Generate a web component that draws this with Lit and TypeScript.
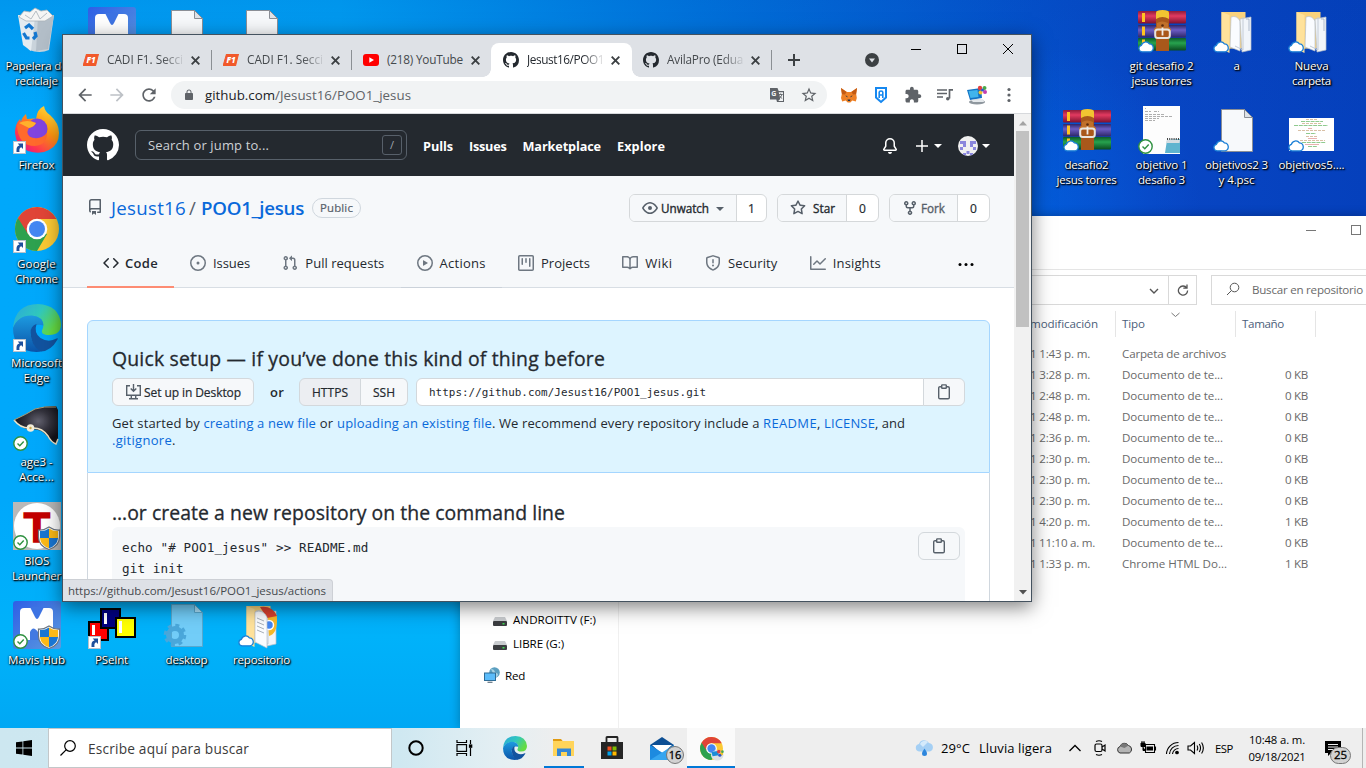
import { LitElement, html, svg, css } from "lit";
import { customElement, property, query } from "lit/decorators.js";
import { classMap } from "lit/directives/class-map.js";

/** One line of text whose tracking is tuned so that it fills a given width. */
@customElement("fit-text")
class FitText extends LitElement {
  @property() text = "";
  @property({ type: Number }) w = 0;
  @query("span") span!: HTMLSpanElement;
  static styles = css`
    :host { display: inline-block; white-space: pre; }
  `;
  render() {
    return html`<span>${this.text}</span>`;
  }
  updated() {
    this.span.style.letterSpacing = "0px";
    const natural = this.span.getBoundingClientRect().width;
    this.span.style.letterSpacing = (this.w - natural) / this.text.length + "px";
    this.style.width = this.w + "px";
  }
}

const t = (text: string, w: number) => html`<fit-text .text=${text} .w=${w}></fit-text>`;
const icon = (d: string, size = 16, box = 16) =>
  html`<svg width=${size} height=${size} viewBox="0 0 ${box} ${box}" fill="currentColor"><path fill-rule="evenodd" d=${d}></path></svg>`;

const P = {
  github: "M8 0C3.58 0 0 3.58 0 8c0 3.54 2.29 6.53 5.47 7.59.4.07.55-.17.55-.38 0-.19-.01-.82-.01-1.49-2.01.37-2.53-.49-2.69-.94-.09-.23-.48-.94-.82-1.13-.28-.15-.68-.52-.01-.53.63-.01 1.08.58 1.23.82.72 1.21 1.87.87 2.33.66.07-.52.28-.87.51-1.07-1.78-.2-3.64-.89-3.64-3.95 0-.87.31-1.59.82-2.15-.08-.2-.36-1.02.08-2.12 0 0 .67-.21 2.2.82.64-.18 1.32-.27 2-.27.68 0 1.36.09 2 .27 1.53-1.04 2.2-.82 2.2-.82.44 1.1.16 1.92.08 2.12.51.56.82 1.27.82 2.15 0 3.07-1.87 3.75-3.65 3.95.29.25.54.73.54 1.48 0 1.07-.01 1.93-.01 2.2 0 .21.15.46.55.38A8.013 8.013 0 0016 8c0-4.42-3.58-8-8-8z",
  repo: "M2 2.5A2.5 2.5 0 014.5 0h8.75a.75.75 0 01.75.75v12.5a.75.75 0 01-.75.75h-2.5a.75.75 0 110-1.5h1.75v-2h-8a1 1 0 00-.714 1.7.75.75 0 01-1.072 1.05A2.495 2.495 0 012 11.5v-9zm10.5-1V9h-8c-.356 0-.694.074-1 .208V2.5a1 1 0 011-1h8zM5 12.25v3.25a.25.25 0 00.4.2l1.45-1.087a.25.25 0 01.3 0L8.6 15.7a.25.25 0 00.4-.2v-3.25a.25.25 0 00-.25-.25h-3.5a.25.25 0 00-.25.25z",
  code: "M4.72 3.22a.75.75 0 011.06 1.06L2.06 8l3.72 3.72a.75.75 0 11-1.06 1.06L.47 8.53a.75.75 0 010-1.06l4.25-4.25zm6.56 0a.75.75 0 10-1.06 1.06L13.94 8l-3.72 3.72a.75.75 0 101.06 1.06l4.25-4.25a.75.75 0 000-1.06l-4.25-4.25z",
  issue: "M8 9.5a1.5 1.5 0 100-3 1.5 1.5 0 000 3zM8 0a8 8 0 100 16A8 8 0 008 0zM1.5 8a6.5 6.5 0 1113 0 6.5 6.5 0 01-13 0z",
  pr: "M7.177 3.073L9.573.677A.25.25 0 0110 .854v4.792a.25.25 0 01-.427.177L7.177 3.427a.25.25 0 010-.354zM3.75 2.5a.75.75 0 100 1.5.75.75 0 000-1.5zm-2.25.75a2.25 2.25 0 113 2.122v5.256a2.251 2.251 0 11-1.5 0V5.372A2.25 2.25 0 011.5 3.25zM11 2.5h-1V4h1a1 1 0 011 1v5.628a2.251 2.251 0 101.5 0V5A2.5 2.5 0 0011 2.5zm1 10.25a.75.75 0 111.5 0 .75.75 0 01-1.5 0zM3.75 12a.75.75 0 100 1.5.75.75 0 000-1.5z",
  play: "M1.5 8a6.5 6.5 0 1113 0 6.5 6.5 0 01-13 0zM8 0a8 8 0 100 16A8 8 0 008 0zM6.379 5.227A.25.25 0 006 5.442v5.117a.25.25 0 00.379.214l4.264-2.559a.25.25 0 000-.428L6.379 5.227z",
  project: "M1.75 0A1.75 1.75 0 000 1.75v12.5C0 15.216.784 16 1.75 16h12.5A1.75 1.75 0 0016 14.25V1.75A1.75 1.75 0 0014.25 0H1.75zM1.5 1.75a.25.25 0 01.25-.25h12.5a.25.25 0 01.25.25v12.5a.25.25 0 01-.25.25H1.75a.25.25 0 01-.25-.25V1.75zM11.75 3a.75.75 0 00-.75.75v7.5a.75.75 0 001.5 0v-7.5a.75.75 0 00-.75-.75zm-8.25.75a.75.75 0 011.5 0v5.5a.75.75 0 01-1.5 0v-5.5zM8 3a.75.75 0 00-.75.75v3.5a.75.75 0 001.5 0v-3.5A.75.75 0 008 3z",
  book: "M0 1.75A.75.75 0 01.75 1h4.253c1.227 0 2.317.59 3 1.501A3.744 3.744 0 0111.006 1h4.245a.75.75 0 01.75.75v10.5a.75.75 0 01-.75.75h-4.507a2.25 2.25 0 00-1.591.659l-.622.621a.75.75 0 01-1.06 0l-.622-.621A2.25 2.25 0 005.258 13H.75a.75.75 0 01-.75-.75V1.75zm8.755 3a2.25 2.25 0 012.25-2.25H14.5v9h-3.757c-.71 0-1.4.201-1.992.572l.004-7.322zm-1.504 7.324l.004-5.073-.002-2.253A2.25 2.25 0 005.003 2.5H1.5v9h3.757a3.75 3.75 0 011.994.574z",
  shield: "M7.467.133a1.75 1.75 0 011.066 0l5.25 1.68A1.75 1.75 0 0115 3.48V7c0 1.566-.32 3.182-1.303 4.682-.983 1.498-2.585 2.813-5.032 3.855a1.7 1.7 0 01-1.33 0c-2.447-1.042-4.049-2.357-5.032-3.855C1.32 10.182 1 8.566 1 7V3.48a1.75 1.75 0 011.217-1.667l5.25-1.68zm.61 1.429a.25.25 0 00-.153 0l-5.25 1.68a.25.25 0 00-.174.238V7c0 1.358.275 2.666 1.057 3.86.784 1.194 2.121 2.34 4.366 3.297a.2.2 0 00.154 0c2.245-.956 3.582-2.104 4.366-3.298C13.225 9.666 13.5 8.36 13.5 7V3.48a.25.25 0 00-.174-.237l-5.25-1.68zM9 10.5a1 1 0 11-2 0 1 1 0 012 0zm-.25-5.75a.75.75 0 10-1.5 0v3a.75.75 0 001.5 0v-3z",
  graph: "M1.5 1.75a.75.75 0 00-1.5 0v12.5c0 .414.336.75.75.75h14.5a.75.75 0 000-1.5H1.5V1.75zm14.28 2.53a.75.75 0 00-1.06-1.06L10 7.94 7.53 5.47a.75.75 0 00-1.06 0L3.22 8.72a.75.75 0 001.06 1.06L7 7.06l2.47 2.47a.75.75 0 001.06 0l5.25-5.25z",
  eye: "M1.679 7.932c.412-.621 1.242-1.75 2.366-2.717C5.175 4.242 6.527 3.5 8 3.5c1.473 0 2.824.742 3.955 1.715 1.124.967 1.954 2.096 2.366 2.717a.119.119 0 010 .136c-.412.621-1.242 1.75-2.366 2.717C10.825 11.758 9.473 12.5 8 12.5c-1.473 0-2.824-.742-3.955-1.715C2.92 9.818 2.09 8.69 1.679 8.068a.119.119 0 010-.136zM8 2c-1.981 0-3.67.992-4.933 2.078C1.797 5.169.88 6.423.43 7.1a1.619 1.619 0 000 1.798c.45.678 1.367 1.932 2.637 3.024C4.329 13.008 6.019 14 8 14c1.981 0 3.67-.992 4.933-2.078 1.27-1.091 2.187-2.345 2.637-3.023a1.619 1.619 0 000-1.798c-.45-.678-1.367-1.932-2.637-3.023C11.671 2.992 9.981 2 8 2zm0 8a2 2 0 100-4 2 2 0 000 4z",
  star: "M8 .25a.75.75 0 01.673.418l1.882 3.815 4.21.612a.75.75 0 01.416 1.279l-3.046 2.97.719 4.192a.75.75 0 01-1.088.791L8 12.347l-3.766 1.98a.75.75 0 01-1.088-.79l.72-4.194L.818 6.374a.75.75 0 01.416-1.28l4.21-.611L7.327.668A.75.75 0 018 .25zm0 2.445L6.615 5.5a.75.75 0 01-.564.41l-3.097.45 2.24 2.184a.75.75 0 01.216.664l-.528 3.084 2.769-1.456a.75.75 0 01.698 0l2.77 1.456-.53-3.084a.75.75 0 01.216-.664l2.24-2.183-3.096-.45a.75.75 0 01-.564-.41L8 2.694v.001z",
  fork: "M5 3.25a.75.75 0 11-1.5 0 .75.75 0 011.5 0zm0 2.122a2.25 2.25 0 10-1.5 0v.878A2.25 2.25 0 005.75 8.5h1.5v2.128a2.251 2.251 0 101.5 0V8.5h1.5a2.25 2.25 0 002.25-2.25v-.878a2.25 2.25 0 10-1.5 0v.878a.75.75 0 01-.75.75h-4.5A.75.75 0 015 6.25v-.878zm3.75 7.378a.75.75 0 11-1.5 0 .75.75 0 011.5 0zm3-8.75a.75.75 0 100-1.5.75.75 0 000 1.5z",
  bell: "M8 16a2 2 0 001.985-1.75c.017-.137-.097-.25-.235-.25h-3.5c-.138 0-.252.113-.235.25A2 2 0 008 16zM8 1.5A3.5 3.5 0 004.5 5v2.947c0 .346-.102.683-.294.97l-1.703 2.556a.018.018 0 00-.003.01l.001.006c0 .002.002.004.004.006a.017.017 0 00.006.004l.007.001h10.964l.007-.001a.016.016 0 00.006-.004.016.016 0 00.004-.006l.001-.007a.017.017 0 00-.003-.01l-1.703-2.554a1.75 1.75 0 01-.294-.97V5A3.5 3.5 0 008 1.5zM3 5a5 5 0 0110 0v2.947c0 .05.015.098.042.139l1.703 2.555A1.518 1.518 0 0113.482 13H2.518a1.518 1.518 0 01-1.263-2.36l1.703-2.554A.25.25 0 003 7.947V5z",
  arrow: "M20 11H7.83l5.59-5.59L12 4l-8 8 8 8 1.41-1.41L7.83 13H20v-2z",
  forward: "M4 11h12.17l-5.59-5.59L12 4l8 8-8 8-1.41-1.41L16.17 13H4v-2z",
  reload: "M17.65 6.35C16.2 4.9 14.21 4 12 4c-4.42 0-7.99 3.58-7.99 8s3.57 8 7.99 8c3.73 0 6.84-2.55 7.73-6h-2.08c-.82 2.33-3.04 4-5.65 4-3.31 0-6-2.69-6-6s2.69-6 6-6c1.66 0 3.14.69 4.22 1.78L13 11h7V4l-2.35 2.35z",
  lock: "M18 8h-1V6c0-2.76-2.24-5-5-5S7 3.24 7 6v2H6c-1.1 0-2 .9-2 2v10c0 1.1.9 2 2 2h12c1.1 0 2-.9 2-2V10c0-1.1-.9-2-2-2zM8.9 6c0-1.71 1.39-3.1 3.1-3.1s3.1 1.39 3.1 3.1v2H8.9V6z",
  puzzle: "M20.5 11H19V7c0-1.1-.9-2-2-2h-4V3.5C13 2.12 11.88 1 10.5 1S8 2.12 8 3.5V5H4c-1.1 0-1.99.9-1.99 2v3.8H3.5c1.49 0 2.7 1.21 2.7 2.7s-1.21 2.7-2.7 2.7H2V20c0 1.1.9 2 2 2h3.8v-1.5c0-1.49 1.21-2.7 2.7-2.7 1.49 0 2.7 1.21 2.7 2.7V22H17c1.1 0 2-.9 2-2v-4h1.5c1.38 0 2.5-1.12 2.5-2.5S21.88 11 20.5 11z",
  bookmark: "M22 9.24l-7.19-.62L12 2 9.19 8.63 2 9.24l5.46 4.73L5.82 21 12 17.27 18.18 21l-1.63-7.03L22 9.24zM12 15.4l-3.76 2.27 1-4.28-3.32-2.88 4.38-.38L12 6.1l1.71 4.04 4.38.38-3.32 2.88 1 4.28L12 15.4z",
};

/* ---- desktop artwork, drawn on a 48 x 48 field ---- */
const shortcut = svg`<rect x="0.5" y="35.5" width="12" height="12" fill="#fff" stroke="#b9c2cc"/><path d="M3.500 46v-2.500q0-3.500 3-4l-1.800-2H10v5.500l-1.700-1.700q-2.500.5-1.800 4.700z" fill="#1d4f9c"/>`;
const check = svg`<circle cx="7.500" cy="40.500" r="6.700" fill="#fff" stroke="#2f9141" stroke-width="1.400"/><path d="M4.500 40.500l2.300 2.300 3.900-4.200" fill="none" stroke="#2f9141" stroke-width="1.400"/>`;
const cloud = svg`<path d="M4 44.800a3.300 3.300 0 0 1-.6-6.500 4.500 4.500 0 0 1 8-1.500 4.100 4.100 0 0 1 1 8z" fill="#fff" stroke="#1a7fd6" stroke-width="1.300"/>`;
const uac = svg`<path d="M36 25q5 3.500 10.500 3v7q0 9-10.500 12.500Q25.500 44 25.500 35v-7Q31 28.500 36 25z" fill="#fff" stroke="#6b7480" stroke-width="1.200"/><path d="M36 26.500V36H27v-7q5 .2 9-2.500zM45 36v.5Q44 43.500 36 46.300V36z" fill="#1976d2"/><path d="M36 26.500V36h9v-7q-5 .2-9-2.500zM27 36v.5q1 7 9 9.800V36z" fill="#fcb916"/>`;
const page = svg`<path d="M8.500 3.500h23l8 8v34h-31z" fill="#f7f9fb" stroke="#8b8f96"/><path d="M31.500 3.500v8h8z" fill="#dfe3e8" stroke="#8b8f96"/>`;
const mavis = svg`<defs><linearGradient id="mv" x1="0" x2="1" y2="1"><stop stop-color="#2e5fe6"/><stop offset="1" stop-color="#5c9bdf"/></linearGradient></defs><rect width="48" height="48" rx="3" fill="url(#mv)"/><rect x="7" y="7" width="33" height="32" rx="4" fill="#fff"/><path d="M17 6h14l-5 10q-2 4-4 0z" fill="#3d73e3"/><path d="M17 39v-8q3-7 8 0 4-5 6 0v8z" fill="#4279e2"/>`;
const folder = svg`<path d="M8.500 5h24v36l-24 1z" fill="#f9d27c"/><path d="M8.500 5l8 3v38l-8-4z" fill="#ffe29b"/><path d="M18 10q6-2 9 4v30l-10-4z" fill="#fafcff" stroke="#b8c0ca" stroke-width=".7"/><path d="M27 12l11-2v33l-9 2z" fill="#f1f5fa" stroke="#b8c0ca" stroke-width=".7"/><path d="M30 10v33l-8-4" fill="none" stroke="#c4ccd6"/><path d="M33 12h3v12" fill="none" stroke="#93a3b7" stroke-width=".7"/>`;
const rar = svg`<defs>
  <linearGradient id="r1" x2="0" y2="1"><stop stop-color="#8c1c3a"/><stop offset=".4" stop-color="#e23a60"/><stop offset="1" stop-color="#7c1230"/></linearGradient>
  <linearGradient id="r2" x2="0" y2="1"><stop stop-color="#2c2668"/><stop offset=".4" stop-color="#6c5cc4"/><stop offset="1" stop-color="#2c2668"/></linearGradient>
  <linearGradient id="r3" x2="0" y2="1"><stop stop-color="#0c5a28"/><stop offset=".4" stop-color="#27a34e"/><stop offset="1" stop-color="#0a4a20"/></linearGradient></defs>
  <rect y="4" width="48" height="12.500" rx="1" fill="url(#r1)"/><rect y="18" width="48" height="12.500" rx="1" fill="url(#r2)"/><rect y="31" width="48" height="12.500" rx="1" fill="url(#r3)"/>
  <path d="M4 6h3v9H4zM4 19.500h3v9H4zM4 32.500h3v9H4z" fill="#ffc421"/>
  <rect x="18" y="4" width="13" height="40" fill="#a9581b"/><path d="M18 12V6q0-3 6.500-3T31 6v6q-6.500-4-13 0z" fill="#f2c431"/>
  <path d="M16 24q0-4 3-4v-4q5-3 11 0v4q3 0 3 4z" fill="#c0702a"/><circle cx="24.500" cy="18.500" r="1.300" fill="#5c2c0c"/><rect x="17.200" y="22.500" width="14.600" height="8.500" rx="2.500" fill="none" stroke="#e8e4de" stroke-width="2"/><path d="M24.500 20.500v8" stroke="#efece8" stroke-width="1.800"/>`;
const chromeLogo = svg`<circle cx="24" cy="24" r="22" fill="#fbc934"/><path d="M24 24L4.950 13A22 22 0 0 0 24 46l10-17z" fill="#2da14f"/><path d="M24 14h19.600A22 22 0 0 0 4.950 13L15 29q-2-15 9-15z" fill="#e04437"/><circle cx="24" cy="24" r="10.300" fill="#fff"/><circle cx="24" cy="24" r="8" fill="#4487f2"/>`;
const edgeLogo = svg`<defs><linearGradient id="e1" x2="1" y2=".5"><stop stop-color="#2aa7dc"/><stop offset=".55" stop-color="#31c8bd"/><stop offset="1" stop-color="#65dc43"/></linearGradient><linearGradient id="e2" x2="0" y2="1"><stop stop-color="#1d9be0"/><stop offset="1" stop-color="#0b53a8"/></linearGradient></defs>
  <path d="M0 24Q2 0 25 0q21 1 23 20 0 11-12 11-10 0-6-7 2-10-10-12Q6 11 0 24z" fill="url(#e1)"/>
  <path d="M0 24Q5 11 19 11.500q11 1 11.500 10-12-3-13 8 0 11 13 17-4 1.500-7 1.500Q0 47 0 24z" fill="url(#e2)"/>
  <path d="M17.500 29q0-7 6-9-3 9 4 14 8 5 16 .5 2-.8 1 1Q38 47 28 47.500 18 42 17.500 29z" fill="#12539f"/>`;

const ART: Record<string, unknown> = {
  bin: svg`<path d="M5 8l36 0-5 35q-9 4-20 0z" fill="#c9d3db"/><path d="M5 8l5 30 8 6 4-34z" fill="#e4ebf0"/><path d="M41 8l-6 34-12 2 2-34z" fill="#b3bec8"/><path d="M6 10l5-6 6 1 5-4 6 3 6-1 6 6-8 5H13z" fill="#f5f5f5" stroke="#aab2b9" stroke-width=".8"/><path d="M12 8l6 4 5-8 4 8 7-6" fill="none" stroke="#b6bdc4"/><path d="M12 21l4-3 4 4M10.500 26l3 5h3M22 25l1 4-3 3" fill="none" stroke="#1477cf" stroke-width="3.200"/>`,
  firefox: svg`<defs><linearGradient id="ff" x1="1" x2=".2" y2="1"><stop stop-color="#fff44f"/><stop offset=".45" stop-color="#ff980e"/><stop offset=".8" stop-color="#ff3750"/><stop offset="1" stop-color="#e31587"/></linearGradient></defs><path d="M2 27q0-9 5-14l1 3q1-5 5-8l1 5q8-1 9 0Q24 3 31 0q1 6 6 9 9 8 9 18 0 12-10 17-9 5-21 1Q3 40 2 27z" fill="url(#ff)"/><circle cx="24" cy="23" r="10.500" fill="#8144df"/><path d="M4 19q8-8 19-2-2 4-7 5-5 8 5 10 8 1 13-5 0 12-12 13Q5 40 4 19z" fill="#ff6a2c"/><path d="M6 17q8-4 17 0-2 4-7 5z" fill="#ffb12c"/>${shortcut}`,
  chrome: svg`${chromeLogo}${shortcut}`,
  edge: svg`${edgeLogo}${shortcut}`,
  hat: svg`<defs><radialGradient id="ht" cx=".55" cy=".4" r=".55"><stop stop-color="#62616e"/><stop offset=".5" stop-color="#33323c"/><stop offset="1" stop-color="#141319"/></radialGradient></defs><path d="M1 17Q14 11 22 6q9-3 21-3l2 4v28l-2 6q-4-1-9-8-7-8-16-6-10-1-17-10z" fill="url(#ht)"/><path d="M1 17q7 9 17 8 11-1 17 8 3 6 8 8l2-5" fill="none" stroke="#efe5c8" stroke-width="1.500"/><path d="M1 17Q14 11 22 6q9-3 21-2" fill="none" stroke="#a99c74"/><circle cx="17.500" cy="25" r="3.800" fill="#f4eeda"/><circle cx="17.500" cy="25" r="1.200" fill="#c9a94c"/>${check}`,
  bios: svg`<rect width="48" height="48" fill="#b9b9b9"/><circle cx="24" cy="24" r="23" fill="#fff"/><text x="24" y="40" font-family="Liberation Sans" font-weight="900" font-size="43" text-anchor="middle" fill="#c20000" stroke="#c20000" stroke-width="1.600">T</text>${check}${uac}`,
  mavis: svg`${mavis}`,
  mavisHub: svg`${mavis}${check}${uac}`,
  pseint: svg`<rect x="1" y="21" width="19" height="18" fill="#f00" stroke="#000" stroke-width="2"/><path d="M4 24h3v10H4z" fill="#fff"/><rect x="13" y="8" width="19" height="19" fill="#000080" stroke="#000" stroke-width="2"/><path d="M16 12h3v11h-3z" fill="#fff"/><rect x="28" y="17" width="19" height="19" fill="#ff0" stroke="#000" stroke-width="2"/><path d="M31 20h3v12h-3z" fill="#fff"/>${shortcut}`,
  ini: svg`<path d="M8.500 3.500h23l8 8v34h-31z" fill="#72cdf8" stroke="#58a9cf"/><path d="M31.500 3.500v8h8z" fill="#a8e0fb" stroke="#58a9cf"/><circle cx="12" cy="34" r="6.500" fill="none" stroke="#4aa7da" stroke-width="5"/><circle cx="12" cy="34" r="9.800" fill="none" stroke="#4aa7da" stroke-width="3" stroke-dasharray="4 3.700"/>`,
  page: svg`${page}`,
  pageCloud: svg`${page}${cloud}`,
  folder: svg`${folder}${cloud}`,
  repos: svg`${folder}<path d="M29 9q10-2 10 10 0 14-8 16z" fill="#f7b92b"/><path d="M22 6q12-2 17 9l-10 2z" fill="#d8402f"/><circle cx="31" cy="24" r="4.500" fill="#4487f2" stroke="#fff" stroke-width="1.500"/><path d="M17 11q8-3 12 5v31l-12-6z" fill="#fafcff" stroke="#b8c0ca" stroke-width=".7"/><path d="M19 17l7 3M19 21l7 3M19 25l7 3M19 29l7 3" stroke="#a9b1bb"/>${cloud}`,
  rar: svg`${rar}${cloud}`,
  note: svg`<rect x="5" width="37" height="48" fill="#fdfdfd"/><path d="M7 2.500h1M7 5.500h6M16 5.500h5M7 8.500h20M7 10.500h28M7 12.500h14M7 14.500h10" stroke="#9b9b9b" stroke-width=".8" stroke-dasharray="3 1"/><path d="M29 34l13-1v14H27z" fill="#5fb4cf"/><path d="M29 34h13l-.5 3H28z" fill="#d5dde2"/><path d="M29 33h13" stroke="#444" stroke-width="2" stroke-dasharray="1 1.200"/>${check}`,
  shot: svg`<rect x="1" y="12" width="45" height="33" fill="#fff"/><g opacity=".6"><path d="M18 13.500h12M14 17.500h20M10 24.500h28M18 30.500h12M12 34.500h25" stroke="#b98b5a" stroke-width=".9" stroke-dasharray="3 1"/><path d="M13 15.500h22M6 19.500h34M18 27.500h10M14 36.500h24M20 40.500h9" stroke="#46a845" stroke-width="1" stroke-dasharray="4 .8"/><path d="M20 22.500h4M20 32.500h9M17 38.500h14" stroke="#cf5a5a" stroke-width=".8"/></g>${cloud}`,
};

type Item = { c: number; r: number; art: string; label: [string, number][] };
const ITEMS: Item[] = [
  { c: 0, r: 0, art: "bin", label: [["Papelera de", 62], ["reciclaje", 43]] },
  { c: 1, r: 0, art: "mavis", label: [] },
  { c: 2, r: 0, art: "page", label: [] },
  { c: 3, r: 0, art: "page", label: [] },
  { c: 0, r: 1, art: "firefox", label: [["Firefox", 36]] },
  { c: 0, r: 2, art: "chrome", label: [["Google", 39], ["Chrome", 43]] },
  { c: 0, r: 3, art: "edge", label: [["Microsoft", 51], ["Edge", 26]] },
  { c: 0, r: 4, art: "hat", label: [["age3 -", 32], ["Acce...", 35]] },
  { c: 0, r: 5, art: "bios", label: [["BIOS", 25], ["Launcher", 49]] },
  { c: 0, r: 6, art: "mavisHub", label: [["Mavis Hub", 57]] },
  { c: 1, r: 6, art: "pseint", label: [["PSeInt", 33]] },
  { c: 2, r: 6, art: "ini", label: [["desktop", 42]] },
  { c: 3, r: 6, art: "repos", label: [["repositorio", 57]] },
  { c: 15, r: 0, art: "rar", label: [["git desafio 2", 64], ["jesus torres", 60]] },
  { c: 16, r: 0, art: "folder", label: [["a", 6]] },
  { c: 17, r: 0, art: "folder", label: [["Nueva", 34], ["carpeta", 39]] },
  { c: 14, r: 1, art: "rar", label: [["desafio2", 44], ["jesus torres", 60]] },
  { c: 15, r: 1, art: "note", label: [["objetivo 1", 52], ["desafio 3", 47]] },
  { c: 16, r: 1, art: "pageCloud", label: [["objetivos2 3", 63], ["y 4.psc", 36]] },
  { c: 17, r: 1, art: "shot", label: [["objetivos5....", 66]] },
];

const FILES: [string, number, string, string][] = [
  ["1 1:43 p. m.", 60, "Carpeta de archivos", ""],
  ["1 3:28 p. m.", 60, "Documento de te...", "0 KB"],
  ["1 2:48 p. m.", 60, "Documento de te...", "0 KB"],
  ["1 2:48 p. m.", 60, "Documento de te...", "0 KB"],
  ["1 2:36 p. m.", 60, "Documento de te...", "0 KB"],
  ["1 2:30 p. m.", 60, "Documento de te...", "0 KB"],
  ["1 2:30 p. m.", 60, "Documento de te...", "0 KB"],
  ["1 2:30 p. m.", 60, "Documento de te...", "0 KB"],
  ["1 4:20 p. m.", 60, "Documento de te...", "1 KB"],
  ["1 11:10 a. m.", 65, "Documento de te...", "0 KB"],
  ["1 1:33 p. m.", 60, "Chrome HTML Do...", "1 KB"],
];
const TYPE_W: Record<string, number> = { "Carpeta de archivos": 104, "Documento de te...": 101, "Chrome HTML Do...": 105 };

@customElement("desktop-icons")
class DesktopIcons extends LitElement {
  static styles = css`
    .item { position: absolute; width: 75px; display: flex; flex-direction: column; align-items: center; }
    .label { display: flex; flex-direction: column; align-items: center; margin-top: 3px; font-size: 11.6px; line-height: 15px; color: #fff; text-shadow: 1px 1px 2px #000, 1px 1px 1px rgba(0, 0, 0, 0.8), 0 0 2px rgba(0, 0, 0, 0.8); }
    svg { overflow: visible; }
  `;
  render() {
    return ITEMS.map(
      (i) => html`<div class="item" style="left:${i.c * 75 - 1}px;top:${i.r * 99 + 7}px">
        <svg width="48" height="48" viewBox="0 0 48 48">${ART[i.art]}</svg>
        <div class="label">${i.label.map(([s, w]) => t(s, w))}</div>
      </div>`
    );
  }
}

@customElement("explorer-window")
class ExplorerWindow extends LitElement {
  static styles = css`
    :host { display: flex; flex-direction: column; background: #fff; font-size: 11.6px; color: #6a6a6a; overflow: hidden; }
    .title { height: 54px; border-bottom: 1px solid #e5e5e5; box-sizing: border-box; display: flex; justify-content: flex-end; align-items: flex-start; padding-top: 9px; gap: 35px; }
    .bar { display: flex; justify-content: flex-end; margin-top: 5px; height: 30px; }
    .addr { width: 700px; border: 1px solid #d9d9d9; box-sizing: border-box; display: flex; justify-content: flex-end; align-items: center; }
    .addr svg { margin: 2px 7px 0 0; }
    .reload { width: 29px; margin-left: -1px; border: 1px solid #d9d9d9; box-sizing: border-box; display: flex; align-items: center; justify-content: center; }
    .reload svg { margin-left: 1px; }
    .find { width: 155px; margin-left: 14px; border: 1px solid #d9d9d9; border-right: 0; box-sizing: border-box; display: flex; align-items: center; padding: 0 0 2px 14px; gap: 12px; white-space: nowrap; }
    .body { flex: 1; display: flex; }
    .tree { width: 159px; border-right: 1px solid #f0f0f0; box-sizing: border-box; display: flex; flex-direction: column; justify-content: flex-end; color: #000; padding: 0 0 41px 24px; }
    .node { display: flex; align-items: center; gap: 5px; height: 24px; }
    .drive { padding-left: 9px; gap: 6px; }
    .net { margin-top: 8px; }
    .drive svg { position: relative; top: 2px; }
    .list { flex: 1; padding-left: 411px; display: flex; flex-direction: column; }
    .head, .row { display: grid; grid-template-columns: 85px 120px 80px 1fr; align-items: center; }
    .head { height: 26px; margin: 6px 0 6px; color: #4c607a; line-height: 26px; }
    .head > div + div { border-left: 1px solid #e5e5e5; padding-left: 6px; height: 26px; }
    .tipo { position: relative; }
    .tipo svg { position: absolute; left: 55px; top: 1px; }
    .row { height: 21px; }
    .type { padding-left: 7px; }
    .size { text-align: right; padding-right: 7px; }
  `;
  drive() {
    return html`<svg width="14" height="9" viewBox="0 0 14 9"><path d="M2 0h10l2 4H0z" fill="#c9cccf"/><rect y="4" width="14" height="5" rx="1" fill="#3b3d40"/><rect x="9.500" y="6" width="2" height="1.500" fill="#3fdc52"/></svg>`;
  }
  render() {
    return html`
      <div class="title">
        <svg width="10" height="10"><path d="M0 5.500h10" stroke="#777"/></svg>
        <svg width="15" height="10"><rect x=".5" y=".5" width="9" height="9" fill="none" stroke="#777"/></svg>
      </div>
      <div class="bar">
        <div class="addr"><svg width="14" height="8" viewBox="0 0 14 8"><path d="M3 2l4 4 4-4" fill="none" stroke="#555" stroke-width="1.400"/></svg></div>
        <div class="reload"><svg width="12" height="12" viewBox="0 0 12 12"><path d="M9.800 4A4.600 4.600 0 1 0 10.600 6.500M10 .5v3.700H6.300" fill="none" stroke="#555" stroke-width="1.300"/></svg></div>
        <div class="find">
          <svg width="14" height="14" viewBox="0 0 14 14"><circle cx="8.500" cy="5.500" r="4.300" fill="none" stroke="#555"/><path d="M5.500 8.500L1 13" stroke="#555"/></svg>
          ${t("Buscar en repositorio", 111)}
        </div>
      </div>
      <div class="body">
        <div class="tree">
          <div class="node drive">${this.drive()}${t("ANDROIT (E:)", 70)}</div>
          <div class="node drive">${this.drive()}${t("ANDROITTV (F:)", 83)}</div>
          <div class="node drive">${this.drive()}${t("LIBRE (G:)", 51)}</div>
          <div class="node net">
            <svg width="16" height="16" viewBox="0 0 16 16"><circle cx="10.500" cy="5.500" r="5.300" fill="#5b9fc0"/><path d="M7 2q3 0 4 3l3 2q0 3-3 3.500" fill="#a9d3e4"/><rect x=".5" y="6" width="11" height="7.500" fill="#5bbcfa" stroke="#2f6c96"/><path d="M3.500 15.300h5" stroke="#6c7c89" stroke-width="1.300"/></svg>
            ${t("Red", 20)}
          </div>
        </div>
        <div class="list">
          <div class="head">
            <div>${t("modificación", 68)}</div>
            <div class="tipo">${t("Tipo", 23)}<svg width="9" height="6"><path d="M.5 1L4.500 4.500 8.500 1" fill="none" stroke="#777"/></svg></div>
            <div>${t("Tamaño", 42)}</div>
            <div></div>
          </div>
          ${FILES.map(
            ([d, w, ty, s]) => html`<div class="row"><div>${t(d, w)}</div><div class="type">${t(ty, TYPE_W[ty])}</div><div class="size">${s ? t(s, 23) : ""}</div></div>`
          )}
        </div>
      </div>
    `;
  }
}

const f1 = html`<svg width="16" height="12" viewBox="0 0 16 12"><path d="M3.500 0h12L12.500 12H0z" fill="#f1592a" stroke="#f1592a" stroke-linejoin="round"/><text x="8" y="9" font-size="8" font-weight="800" font-style="italic" font-family="Open Sans" text-anchor="middle" fill="#fff">F1</text></svg>`;
const yt = html`<svg width="16" height="12" viewBox="0 0 16 12"><rect width="16" height="12" rx="3" fill="#f00"/><path d="M6.300 3.300v5.400L11 6z" fill="#fff"/></svg>`;
const gh = icon(P.github);
const TABS = [
  { ic: f1, s: "CADI F1. Secci", w: 76 },
  { ic: f1, s: "CADI F1. Secci", w: 76 },
  { ic: yt, s: "(218) YouTube", w: 76, full: true },
  { ic: gh, s: "Jesust16/POO1", w: 77, active: true },
  { ic: gh, s: "AvilaPro (Edua", w: 76 },
];
const NAV: [string, string, number][] = [
  ["code", "Code", 33],
  ["issue", "Issues", 37],
  ["pr", "Pull requests", 79],
  ["play", "Actions", 46],
  ["project", "Projects", 49],
  ["book", "Wiki", 27.5],
  ["shield", "Security", 49.5],
  ["graph", "Insights", 48],
];

@customElement("browser-window")
class BrowserWindow extends LitElement {
  static styles = css`
    :host { display: flex; flex-direction: column; background: #fff; overflow: hidden; color: #24292f; font-size: 13px; }
    svg { flex: none; display: block; }
    .strip { height: 42px; background: #dee1e6; display: flex; padding-left: 8px; box-sizing: border-box; color: #45494d; flex: none; }
    .tab { width: 140px; box-sizing: border-box; height: 34px; margin-top: 8px; padding: 0 10px 0 12px; display: flex; align-items: center; position: relative; font-size: 11.8px; }
    .tab .name { margin-left: 8px; width: 77px; overflow: hidden; line-height: 19px; height: 20px; }
    .tab .fade { -webkit-mask-image: linear-gradient(90deg, #000 72%, transparent 102%); mask-image: linear-gradient(90deg, #000 72%, transparent 102%); }
    .tab .x { margin-left: 7px; }
    .tab.sep { height: 20px; margin-top: 15px; }
    .tab.sep::after { content: ""; position: absolute; right: -1px; top: 0; width: 1px; height: 20px; background: #8b8f94; }
    .tab.active { background: #fff; border-radius: 8px 8px 0 0; color: #24292f; width: 141px; margin-right: -1px; }
    .tab.active::before, .tab.active::after { content: ""; position: absolute; bottom: 0; width: 8px; height: 8px; }
    .tab.active::before { left: -8px; background: radial-gradient(circle at 0 0, #dee1e6 7.500px, #fff 8px); }
    .tab.active::after { right: -8px; background: radial-gradient(circle at 100% 0, #dee1e6 7.500px, #fff 8px); }
    .gh { color: #24292f; }
    .plus { margin: 19px 0 0 17px; }
    .search-tabs { margin: 18px 0 0 65px; }
    .ctl { display: flex; margin: 9px 0 0 32px; gap: 36px; color: #000; }
    .tools { height: 36px; display: flex; align-items: center; padding: 0 13px; color: #5f6368; flex: none; border-bottom: 1px solid #d7d9dc; }
    .tools .nav { display: flex; gap: 14px; }
    .tools .nav svg { width: 20px; height: 20px; margin: -1px; }
    .dim { color: #bdc1c6; }
    .omni { width: 656px; height: 28px; border-radius: 14px; background: #f1f3f4; margin-left: 13px; box-sizing: border-box; padding: 0 9px 0 12px; display: flex; align-items: center; font-size: 13.300px; }
    .omni .url { margin-left: 10px; flex: 1; display: flex; }
    .omni .host { color: #202124; }
    .omni .end { display: flex; gap: 15px; align-items: center; }
    .ext { display: flex; gap: 14px; margin-left: 13px; align-items: center; }
    .ext .me { margin-left: -1px; }
    .ext .more { margin-left: 0; }
    .view { flex: 1; display: flex; min-height: 0; }
    .page { flex: 1; overflow: hidden; position: relative; }
    .scroll { width: 17px; background: #f1f1f1; display: flex; flex-direction: column; align-items: center; }
    .scroll .up { margin-top: 7px; }
    .scroll .thumb { width: 13px; height: 196px; background: #c1c1c1; margin-top: 5px; }
    .scroll .down { margin-top: auto; margin-bottom: 6px; }
    .ghead { height: 62px; background: #24292f; color: #fff; display: flex; align-items: center; padding: 0 24px; }
    .ghead .box { width: 272px; height: 30px; box-sizing: border-box; border: 1px solid #57606a; border-radius: 6px; margin-left: 16px; display: flex; align-items: center; justify-content: space-between; padding: 0 4px 0 12px; color: #cdd1d5; }
    .slash { width: 20px; height: 20px; box-sizing: border-box; border: 1px solid #57606a; border-radius: 3px; font-size: 11px; line-height: 17px; text-align: center; color: #a0a6ac; }
    .links { display: flex; gap: 16px; margin-left: 16px; font-weight: 700; font-size: 12.700px; flex: 1; padding-top: 2px; }
    .caret { width: 0; height: 0; border: 4px solid transparent; border-top-color: currentColor; border-bottom: 0; }
    .acts { display: flex; align-items: center; padding-top: 1px; }
    .add { margin: 0 6px 0 18px; }
    .face { margin: 0 4px 0 16px; }
    .rhead { height: 112px; box-sizing: border-box; background: #f6f8fa; border-bottom: 1px solid #d8dee4; padding: 18px 24px 0; display: flex; flex-direction: column; justify-content: space-between; }
    .top { display: flex; align-items: center; height: 28px; color: #57606a; }
    .top > svg { margin-top: -2px; }
    .title { font-size: 18.700px; display: flex; margin: -2px 0 0 8px; color: #0969da; }
    .title .sl { color: #57606a; margin: 0 5px 0 3px; }
    .title b { font-weight: 600; }
    .pill { border: 1px solid #d0d7de; border-radius: 10px; height: 20px; box-sizing: border-box; padding: 0 7px; margin-left: 8px; font-size: 11.400px; line-height: 18px; margin-top: -1px; -webkit-text-stroke: 0.2px currentColor; }
    .btns { display: flex; gap: 10px; margin-left: auto; color: #24292f; font-size: 11.700px; }
    .grp { display: flex; border: 1px solid #d5d8da; border-radius: 6px; height: 28px; box-sizing: border-box; background: #fff; overflow: hidden; }
    .grp .l { background: #f6f8fa; border-right: 1px solid #d5d8da; display: flex; align-items: center; padding: 0 12px; -webkit-text-stroke: 0.35px currentColor; }
    .grp .l svg { color: #57606a; }
    .grp .n { display: flex; align-items: center; justify-content: center; flex: 1; font-size: 12px; -webkit-text-stroke: 0.2px currentColor; }
    .g1 { width: 138px; } .g2 { width: 102px; } .g3 { width: 101px; }
    .g1 .l { width: 107px; box-sizing: border-box; } .g2 .l { width: 69px; box-sizing: border-box; } .g3 .l { width: 68px; box-sizing: border-box; color: #57606a; }
    .g1 svg { margin-right: 3px; }
    .g1 .caret { margin: 2px 0 0 7px; color: #57606a; }
    .g2 svg { margin-right: 7px; }
    .g3 svg { margin-right: 3px; }
    .tabs { display: flex; height: 48px; margin-bottom: -1px; }
    .nt { display: flex; align-items: center; gap: 7px; padding: 0 16.300px 0 16px; border-bottom: 2px solid transparent; }
    .nt svg { color: #6e7781; }
    .nt.on { font-weight: 600; border-color: #fd8c73; gap: 6px; padding-right: 16px; }
    .nt.on svg { color: #24292f; }
    .nt.hov { border-bottom-color: #cbd2da; border-bottom-width: 1px; padding-bottom: 1px; }
    .dots { margin-left: auto; align-self: center; margin-right: 16px; }
    .main { margin: 32px 24px 0; }
    .quick { height: 153px; box-sizing: border-box; border: 1px solid #a5d6ff; border-radius: 6px 6px 0 0; background: #ddf4ff; padding: 23px 24px 0; }
    h3 { margin: 0; font-weight: 500; font-size: 19.400px; line-height: 30px; height: 34px; -webkit-text-stroke: 0.3px currentColor; }
    .set { display: flex; align-items: center; height: 28px; font-size: 12px; -webkit-text-stroke: 0.2px currentColor; }
    .btn { height: 28px; box-sizing: border-box; border: 1px solid #d3d8dc; border-radius: 6px; background: #f6f8fa; display: flex; align-items: center; padding: 0 12px; gap: 2px; color: #24292f; }
    .btn svg { color: #57606a; }
    .desk { width: 142px; }
    .or { margin: 0 15px 0 16px; font-weight: 600; font-size: 13px; -webkit-text-stroke: 0; }
    .proto { border-radius: 6px 0 0 6px; width: 62px; background: #eceef2; justify-content: center; padding: 0; }
    .ssh { border-radius: 0 6px 6px 0; width: 47px; border-left: 0; justify-content: center; padding: 0; }
    .clone { margin-left: 8px; width: 508px; border-radius: 6px 0 0 6px; background: #fff; font-family: "DejaVu Sans Mono", monospace; font-size: 10.900px; -webkit-text-stroke: 0; }
    .copy { flex: 1; border-radius: 0 6px 6px 0; margin-left: -1px; justify-content: center; padding: 0; }
    .para { margin-top: 9px; line-height: 17px; display: flex; flex-direction: column; }
    .ln { display: flex; height: 17px; }
    .para a, a { color: #0969da; }
    .cmd { height: 200px; border: solid #d0d7de; border-width: 0 1px; padding: 25px 24px 0; }
    .cmd h3 { height: 29px; }
    .pre { background: #f6f8fa; border-radius: 6px; height: 130px; box-sizing: border-box; padding: 10px 5px 0 10px; display: flex; justify-content: space-between; align-items: flex-start; font-family: "DejaVu Sans Mono", monospace; font-size: 12.600px; line-height: 21px; }
    .pre .src { display: flex; flex-direction: column; }
    .pre .btn { width: 42px; padding: 0; justify-content: center; margin-top: -5px; }
    .status { position: absolute; left: 0; bottom: 0; width: 270px; height: 22px; box-sizing: border-box; background: #dee1e6; border: solid #cdd0d5; border-width: 1px 1px 0 0; border-radius: 0 4px 0 0; padding-left: 5px; line-height: 22px; font-size: 11.500px; color: #45494d; }
  `;
  clip() {
    return html`<svg width="16" height="16" viewBox="0 0 16 16" fill="none" stroke="currentColor" stroke-width="1.400"><path d="M5.500 2.700H4A1.300 1.300 0 0 0 2.700 4v9.500A1.300 1.300 0 0 0 4 14.800h8a1.300 1.300 0 0 0 1.300-1.300V4A1.300 1.300 0 0 0 12 2.700h-1.500"/><rect x="5.700" y=".9" width="4.600" height="3.400" rx=".6"/></svg>`;
  }
  render() {
    return html`
      <div class="strip">
        ${TABS.map(
          (b, i) => html`<div class=${classMap({ tab: true, active: !!b.active, sep: i !== 2 && i !== 3 })}>
            <span class="gh">${b.ic}</span><span class=${classMap({ name: true, fade: !b.full })}>${t(b.s, b.w)}</span>
            <svg class="x" width="9" height="9" viewBox="0 0 9 9"><path d="M.7.7l7.600 7.600M8.300.7L.7 8.300" stroke="#3c4043" stroke-width="1.900"/></svg>
          </div>`
        )}
        <svg class="plus" width="12" height="12"><path d="M6 0v12M0 6h12" stroke="#3c4043" stroke-width="2"/></svg>
        <svg class="search-tabs" width="14" height="14"><circle cx="7" cy="7" r="7" fill="#3c4043"/><path d="M4 5.500h6L7 9.500z" fill="#dee1e6"/></svg>
        <div class="ctl">
          <svg width="10" height="10"><path d="M0 5.500h10" stroke="#000"/></svg>
          <svg width="10" height="10"><rect x=".5" y=".5" width="9" height="9" fill="none" stroke="#000"/></svg>
          <svg width="10" height="10"><path d="M0 0l10 10M10 0L0 10" stroke="#000"/></svg>
        </div>
      </div>
      <div class="tools">
        <div class="nav">${icon(P.arrow, 18, 24)}<span class="dim">${icon(P.forward, 18, 24)}</span>${icon(P.reload, 18, 24)}</div>
        <div class="omni">
          ${icon(P.lock, 12, 24)}
          <div class="url"><span class="host">${t("github.com", 70)}</span>${t("/Jesust16/POO1_jesus", 136)}</div>
          <div class="end">
            <svg width="16" height="16" viewBox="0 0 16 16"><path d="M1 1h7.500l1.200 3H15v11H8l-.7-2.500H1z" fill="#5f6368"/><path d="M9.700 5.200H14V14H9.200l2-2z" fill="#f1f3f4"/><text x="4.900" y="9.300" font-size="7" font-weight="700" text-anchor="middle" fill="#f1f3f4" font-family="Open Sans">G</text><path d="M9.700 7.500h4M11.600 6.500v1M10 11.500q2.500-1.500 3-4M10.500 8.500q.8 2 2.700 3" stroke="#5f6368" stroke-width=".9" fill="none"/></svg>
            ${icon(P.bookmark, 18, 24)}
          </div>
        </div>
        <div class="ext">
          <svg width="18" height="18" viewBox="0 0 18 18"><path d="M1 2l6 4h4l6-4-.8 6 .6 4-1 3.500-3.500-1-2 2H7.700l-2-2-3.500 1L1 12l.8-4z" fill="#ee8025"/><path d="M1 2l5.500 4L5 8.500 2 8.300zM17 2l-5.500 4L13 8.500l3-.2z" fill="#c25a13"/><path d="M5.200 9.600l2 .4.300 1.500zM12.800 9.600l-2 .4-.3 1.500zM7.500 13.500h3l-.5 1.500H8z" fill="#23344a"/></svg>
          <svg width="18" height="18" viewBox="0 0 18 18"><path d="M4 2h10v9.500L9 16l-5-4.500z" fill="#fff" stroke="#1688f0" stroke-width="2"/><path d="M7.200 12V6.300q0-1.300 1.800-1.300t1.800 1.300V12M7.200 9h3.600" fill="none" stroke="#1688f0" stroke-width="1.600"/></svg>
          ${icon(P.puzzle, 18, 24)}
          <svg width="18" height="18" viewBox="0 0 18 18" fill="none" stroke="#5f6368" stroke-width="1.700"><path d="M1 4h10M1 7.500h10M1 11h6M13.500 12.500V3.900H17"/><circle cx="11.800" cy="12.800" r="1.800" fill="#5f6368" stroke="none"/></svg>
          <svg class="me" width="20" height="20" viewBox="0 0 20 20"><ellipse cx="10" cy="17" rx="8" ry="2.500" fill="#8f979e"/><path d="M0 5l14-2 1 10-12 2z" fill="#1273c4"/><path d="M1.500 6l9-1 1 7-8 1z" fill="#41b5ec"/><path d="M4 15l12-1 1 3H6z" fill="#e4e8eb"/><circle cx="13" cy="3" r="2.200" fill="#e23f3f"/><circle cx="17.500" cy="3" r="2" fill="#4aa84a"/><circle cx="18" cy="7" r="2" fill="#c23fb0"/><circle cx="13.500" cy="7.500" r="2" fill="#f2c230"/><circle cx="15.500" cy="5" r="1.600" fill="#3158c9"/></svg>
          <svg class="more" width="16" height="18" viewBox="0 0 16 18" fill="#5f6368"><circle cx="8" cy="3.500" r="1.600"/><circle cx="8" cy="9" r="1.600"/><circle cx="8" cy="14.500" r="1.600"/></svg>
        </div>
      </div>
      <div class="view">
        <div class="page">
          <div class="ghead">
            ${icon(P.github, 32)}
            <div class="box">${t("Search or jump to...", 121)}<span class="slash">/</span></div>
            <div class="links">${t("Pulls", 30)}${t("Issues", 37.5)}${t("Marketplace", 78.5)}${t("Explore", 48)}</div>
            <div class="acts">
              ${icon(P.bell)}
              <svg class="add" width="12" height="12" viewBox="0 0 12 12"><path d="M6 0v12M0 6h12" stroke="#fff" stroke-width="1.500"/></svg>
              <span class="caret"></span>
              <svg class="face" width="20" height="20" viewBox="0 0 20 20"><defs><clipPath id="av"><circle cx="10" cy="10" r="10"/></clipPath></defs><g clip-path="url(#av)"><rect width="20" height="20" fill="#f0f0f0"/><path d="M2 5h6v6H5V8H2zM12 5h6v3h-3v3h-3zM2 11h3v3H2zM15 11h3v3h-3zM8.500 15h3v3h-3zM5 17h3v3H5zM12 17h3v3h-3z" fill="#8a86dc"/></g></svg>
              <span class="caret"></span>
            </div>
          </div>
          <div class="rhead">
            <div class="top">
              ${icon(P.repo)}
              <div class="title">${t("Jesust16", 75)}<span class="sl">${t("/", 7)}</span><b>${t("POO1_jesus", 103)}</b></div>
              <span class="pill">${t("Public", 33)}</span>
              <div class="btns">
                <div class="grp g1"><div class="l">${icon(P.eye)}${t("Unwatch", 48)}<span class="caret"></span></div><div class="n">1</div></div>
                <div class="grp g2"><div class="l">${icon(P.star)}${t("Star", 22)}</div><div class="n">0</div></div>
                <div class="grp g3"><div class="l">${icon(P.fork)}${t("Fork", 24)}</div><div class="n">0</div></div>
              </div>
            </div>
            <div class="tabs">
              ${NAV.map(([k, s, w], i) => html`<div class=${classMap({ nt: true, on: i === 0, hov: i === 3 })}>${icon((P as Record<string, string>)[k])}${t(s, w)}</div>`)}
              <svg class="dots" width="16" height="6"><circle cx="2" cy="3.500" r="1.500"/><circle cx="8" cy="3.500" r="1.500"/><circle cx="14" cy="3.500" r="1.500"/></svg>
            </div>
          </div>
          <div class="main">
            <div class="quick">
              <h3>${t("Quick setup — if you’ve done this kind of thing before", 493)}</h3>
              <div class="set">
                <div class="btn desk"><svg width="17" height="16" viewBox="0 0 17 16" fill="none" stroke="currentColor" stroke-width="1.400"><path d="M5 1.700H1.700v9.600h13.600V1.700H12M8.500 0v7M5.700 4.500l2.800 2.800 2.800-2.800M6.300 11.500v3M10.700 11.500v3M4 14.800h9"/></svg>${t("Set up in Desktop", 97)}</div>
                <span class="or">${t("or", 14)}</span>
                <div class="btn proto">${t("HTTPS", 36)}</div>
                <div class="btn ssh">${t("SSH", 22)}</div>
                <div class="btn clone">${t("https://github.com/Jesust16/POO1_jesus.git", 277)}</div>
                <div class="btn copy">${this.clip()}</div>
              </div>
              <div class="para">
                <div class="ln">${t("Get started by ", 91.5)}<a>${t("creating a new file", 112.5)}</a>${t(" or ", 21)}<a>${t("uploading an existing file", 155)}</a>${t(". We recommend every repository include a ", 271)}<a>${t("README", 54)}</a>${t(", ", 7)}<a>${t("LICENSE", 51)}</a>${t(", and", 30)}</div>
                <div class="ln"><a>${t(".gitignore", 60)}</a>.</div>
              </div>
            </div>
            <div class="cmd">
              <h3>${t("…or create a new repository on the command line", 453)}</h3>
              <div class="pre">
                <div class="src">${t('echo "# POO1_jesus" >> README.md', 246.4)}${t("git init", 61.6)}</div>
                <div class="btn">${this.clip()}</div>
              </div>
            </div>
          </div>
          <div class="status">${t("https://github.com/Jesust16/POO1_jesus/actions", 258)}</div>
        </div>
        <div class="scroll">
          <svg class="up" width="8" height="5"><path d="M0 4.500h8L4 0z" fill="#a3a3a3"/></svg>
          <div class="thumb"></div>
          <svg class="down" width="8" height="5"><path d="M0 0h8L4 4.500z" fill="#505050"/></svg>
        </div>
      </div>
    `;
  }
}

@customElement("task-bar")
class TaskBar extends LitElement {
  static styles = css`
    :host { display: flex; align-items: stretch; background: linear-gradient(90deg, #cde7f0 0, #cfe8f1 400px, #e4eff3 500px, #eee 560px); color: #000; font-size: 13px; }
    svg { display: block; flex: none; }
    .cell { display: flex; align-items: center; justify-content: center; width: 48px; box-sizing: border-box; position: relative; }
    .find { width: 344px; box-sizing: border-box; border: 1px solid #c3c7c9; background: #fff; display: flex; align-items: center; padding-left: 11px; gap: 12px; color: #3b3b3b; font-size: 13.700px; }
    .apps { display: flex; }
    .edge { margin-left: 3px; }
    .files { margin-left: 1px; }
    .mail { margin-left: 2px; }
    .front { margin-left: 1px; background: #fafafa; }
    .run::after { content: ""; position: absolute; left: 4px; right: 4px; bottom: 0; height: 2px; background: #0078d7; }
    .front.run::after { left: 0; right: 0; }
    .badge { position: absolute; right: 2px; bottom: 4px; width: 18px; height: 18px; box-sizing: border-box; border: 1px solid #777; border-radius: 50%; background: #d2d2d2; font-size: 11px; line-height: 15px; text-align: center; -webkit-text-stroke: 0.3px #000; }
    .tray { margin-left: auto; display: flex; align-items: center; }
    .wx { display: flex; align-items: center; gap: 9px; margin-right: 16px; }
    .wx svg { margin-right: -2px; }
    .sys { display: flex; gap: 8px; align-items: center; }
    .sys .meet { margin-left: 2px; }
    .sys .bat { margin-left: -1px; }
    .sys .snd { margin-left: -2px; }
    .esp { font-size: 11.300px; margin-left: 10px; }
    .clock { font-size: 11.300px; line-height: 17px; display: flex; flex-direction: column; align-items: center; width: 60px; margin-left: 14px; padding-bottom: 1px; }
    .act { width: 38px; margin-left: 1px; height: 40px; display: flex; align-items: center; padding-left: 17px; box-sizing: border-box; position: relative; }
    .act .badge { right: -5px; bottom: 4px; width: 21px; height: 17px; border-radius: 9px; line-height: 14px; font-size: 11.500px; }
    .peek { width: 4px; height: 40px; border-left: 1px solid #b5b5b5; margin-left: 16px; box-sizing: border-box; }
  `;
  render() {
    return html`
      <div class="cell"><svg width="16" height="16" viewBox="0 0 16 16"><path d="M0 2.300l6.500-.9v6.100H0zM7.300 1.300L16 0v7.500H7.300zM0 8.400h6.500v6.200L0 13.700zM7.300 8.400H16V16l-8.700-1.300z"/></svg></div>
      <div class="find">
        <svg width="16" height="16" viewBox="0 0 16 16" fill="none" stroke="#000" stroke-width="1.200"><circle cx="10" cy="6" r="5.300"/><path d="M6.300 9.700L.5 15.500"/></svg>
        ${t("Escribe aquí para buscar", 161)}
      </div>
      <div class="apps">
        <div class="cell"><svg width="16" height="16"><circle cx="8" cy="8" r="6.700" fill="none" stroke="#000" stroke-width="2"/></svg></div>
        <div class="cell"><svg width="17" height="16" viewBox="0 0 17 16" fill="none" stroke="#000" stroke-width="1.200"><path d="M1 0v2.500h9.500V0M1 16v-2.500h9.500V16M14.500 0v4M14.500 8v8"/><rect x="1" y="4.600" width="9.500" height="6.800"/><rect x="13.500" y="5" width="2.200" height="2.200" fill="#000"/></svg></div>
        <div class="cell edge"><svg width="24" height="24" viewBox="0 0 48 48">${edgeLogo}</svg></div>
        <div class="cell run files"><svg width="22" height="20" viewBox="0 0 22 20"><path d="M0 1h8l2 2.500H0z" fill="#e09a11"/><path d="M0 3h21v15H0z" fill="#ffd45a"/><path d="M4 10.500h14V18h-4v-4H8v4H4z" fill="#3487d6"/></svg></div>
        <div class="cell"><svg width="24" height="24" viewBox="0 0 24 24"><path d="M6.500 7V1.500Q6.500 1 7.500 1h9q1 0 1 .5V7" fill="none" stroke="#222" stroke-width="1.800"/><path d="M1 6h22v17H1z" fill="#252525"/><path d="M7.500 10.500h4v4h-4z" fill="#f25022"/><path d="M12.500 10.500h4v4h-4z" fill="#7fba00"/><path d="M7.500 15.500h4v4h-4z" fill="#00a4ef"/><path d="M12.500 15.500h4v4h-4z" fill="#ffb900"/></svg></div>
        <div class="cell mail"><svg width="24" height="23" viewBox="0 0 24 23"><path d="M0 8l12-8 12 8v15H0z" fill="#0d4f94"/><path d="M2 8h20l-10 9z" fill="#fff"/><path d="M0 8l24 15H0z" fill="#1d8ae0"/><path d="M24 8L0 23h24z" fill="#35a5f0"/></svg><span class="badge">16</span></div>
        <div class="cell run front"><svg width="25" height="25" viewBox="0 0 48 48">${chromeLogo}<ellipse cx="35" cy="37" rx="12" ry="10" fill="#dde1e4"/><path d="M24 30l13-1 1 8-12 2z" fill="#1b8cd8"/><circle cx="38" cy="30" r="3.500" fill="#e23f3f"/><circle cx="43" cy="34" r="3.500" fill="#f2c230"/><circle cx="40" cy="37" r="3" fill="#3158c9"/><circle cx="45" cy="30" r="2.500" fill="#4aa84a"/></svg></div>
      </div>
      <div class="tray">
        <div class="wx">
          <svg width="19" height="16" viewBox="0 0 19 16"><path d="M4 11.500A3.800 3.800 0 0 1 4 4a5.500 5.500 0 0 1 10-1 4.400 4.400 0 0 1 1 8.500z" fill="#a4cff4"/><path d="M5 4a5 5 0 0 1 8-2l-5 5z" fill="#d4eafb"/><path d="M9.500 8.500q2.500 3.500 2.500 5a2.500 2.500 0 0 1-5 0q0-1.500 2.500-5z" fill="#2c86dd"/></svg>
          <span>${t("29°C", 29)}</span><span>${t("Lluvia ligera", 73)}</span>
        </div>
        <div class="sys">
          <svg width="14" height="16" viewBox="0 0 14 16"><path d="M1.500 11L7 5.500l5.500 5.500" fill="none" stroke="#000" stroke-width="1.300"/></svg>
          <svg class="meet" width="16" height="16" viewBox="0 0 16 16" fill="none" stroke="#000" stroke-width="1.200"><rect x="3" y="4" width="7" height="7.500" rx="1.500"/><path d="M10 7l3-2v6l-3-2M4 1.500Q7 0 10 1.500M4 14.500q3 1.500 6 0"/></svg>
          <svg width="17" height="16" viewBox="0 0 17 16"><path d="M4 13a3.400 3.400 0 0 1 0-6.500 4.700 4.700 0 0 1 8.500-1A4 4 0 0 1 13.300 13z" fill="#b4b4b4" stroke="#333"/><path d="M4 6.500a4.700 4.700 0 0 1 8.500-1l-4 2.500z" fill="#777"/></svg>
          <svg class="bat" width="17" height="16" viewBox="0 0 17 16"><path d="M6.500 6.500H13v4H6.500z" fill="#000"/><path d="M5.500 4.500h9v8h-9zM15.500 6.500v4" fill="none" stroke="#000" stroke-width="1.100"/><path d="M1 3h4v3.500H1zM2 1v2M4 1v2M3 7v3.500h3" stroke="#000" fill="#000"/></svg>
          <svg width="16" height="16" viewBox="0 0 16 16" fill="none" stroke="#000" stroke-width="1.100"><path d="M1.500 14A12 12 0 0 1 13.500 2.500M4.500 14a9 9 0 0 1 9-8.500M7.500 14a6 6 0 0 1 6-5.500"/><circle cx="12" cy="12.500" r="1.300" fill="#000"/></svg>
          <svg class="snd" width="18" height="16" viewBox="0 0 18 16" fill="none" stroke="#000" stroke-width="1.100"><path d="M1 6v4h2.500L7.500 13.500v-11L3.500 6zM10 5.500q1.500 2.500 0 5M12.300 4q2.500 4 0 8M14.600 2.500q3.500 5.500 0 11"/></svg>
        </div>
        <span class="esp">${t("ESP", 18)}</span>
        <div class="clock">${t("10:48 a. m.", 56)}${t("09/18/2021", 57)}</div>
        <div class="act"><svg width="16" height="15" viewBox="0 0 16 15"><path d="M0 0h16v12H6l-3 3v-3H0z"/><path d="M3 3.500h10M3 6h10M3 8.500h7" stroke="#eee"/></svg><span class="badge">25</span></div>
        <div class="peek"></div>
      </div>
    `;
  }
}

@customElement("app-root")
class AppRoot extends LitElement {
  static styles = css`
    :host { display: block; width: 1366px; height: 768px; position: relative; overflow: hidden; font-family: "Open Sans", "Noto Sans", sans-serif; background: radial-gradient(circle at 1032px 216px, rgba(0, 110, 240, 0.4), rgba(0, 110, 240, 0) 170px), linear-gradient(180deg, rgba(0, 60, 170, 0.16) 0, rgba(0, 60, 170, 0) 120px), linear-gradient(90deg, #00a8fb 0, #00a6f8 340px, #0078e0 700px, #0551cc 1035px, #0846c4 1150px, #0540bc 1366px); }
    .low { position: absolute; left: 0; top: 500px; width: 460px; height: 228px; background: linear-gradient(180deg, rgba(0, 180, 250, 0), #00b2fa 60%, #00a8f4); }
    explorer-window { position: absolute; left: 460px; top: 216px; width: 906px; height: 512px; box-shadow: 0 0 10px rgba(0, 0, 0, 0.3); }
    browser-window { position: absolute; left: 62px; top: 34px; width: 970px; height: 568px; box-sizing: border-box; border: 1px solid #44525f; box-shadow: 0 5px 18px rgba(0, 0, 0, 0.5); }
    task-bar { position: absolute; left: 0; top: 728px; width: 1366px; height: 40px; }
  `;
  render() {
    return html`
      <div class="low"></div>
      <desktop-icons></desktop-icons>
      <explorer-window></explorer-window>
      <browser-window></browser-window>
      <task-bar></task-bar>
    `;
  }
}
